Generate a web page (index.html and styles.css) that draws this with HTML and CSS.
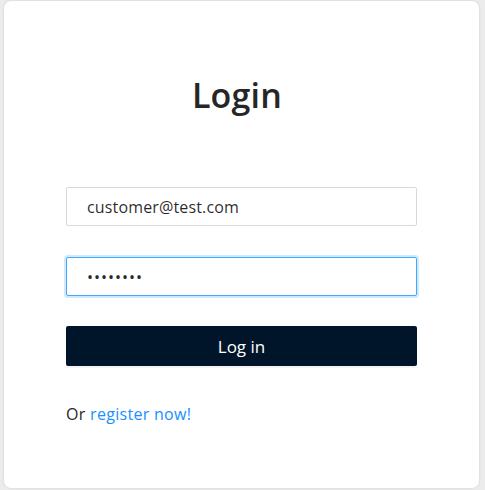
FILE: index.html
```html
<!DOCTYPE html>
<html lang="en">
<head>
<meta charset="utf-8">
<title>Login</title>
<link rel="stylesheet" href="styles.css">
</head>
<body>
<div class="page">
  <div class="card">
    <h1 class="title">Login</h1>
    <form class="form">
      <input class="input" type="text" value="customer@test.com">
      <input class="input input-focus" type="password" value="password">
      <button class="btn" type="button">Log in</button>
      <p class="register">Or <a href="#" class="link">register now!</a></p>
    </form>
  </div>
</div>
</body>
</html>
```

FILE: styles.css
```css
* { box-sizing: border-box; }
html, body { margin: 0; padding: 0; }
body {
  background: #ffffff;
  font-family: "Open Sans", "Noto Sans", sans-serif;
  color: rgba(0, 0, 0, 0.85);
}
.page {
  width: 485px;
  height: 490px;
  padding: 1px 6px 2px 4px;
  background: #ececec;
}
.card {
  height: 100%;
  background: #fff;
  border-radius: 7px;
  box-shadow: 0 0 3px rgba(0, 0, 0, 0.12);
  padding: 72px 62px 0 62px;
  display: flex;
  flex-direction: column;
  align-items: stretch;
}
.title {
  margin: 0;
  padding-right: 9px;
  text-align: center;
  font-size: 34px;
  font-weight: 600;
  line-height: 44px;
  color: #262626;
  letter-spacing: 0.2px;
}
.form {
  margin-top: 70px;
  display: flex;
  flex-direction: column;
}
.input {
  height: 39px;
  border: 1px solid #d9d9d9;
  border-radius: 2px;
  padding: 0 20px;
  font-family: inherit;
  font-size: 16px;
  letter-spacing: 0.15px;
  color: rgba(0, 0, 0, 0.85);
  outline: none;
  background: #fff;
  margin-bottom: 31px;
}
.input-focus {
  border-color: #40a9ff;
  box-shadow: 0 0 0 2px rgba(24, 144, 255, 0.2);
  letter-spacing: 1px;
}
.btn {
  height: 40px;
  border: none;
  border-radius: 2px;
  background: #001529;
  color: #fff;
  font-family: inherit;
  font-size: 17px;
  box-shadow: 0 2px 0 rgba(0, 0, 0, 0.045);
  margin-top: -1px;
}
.register {
  margin: 36px 0 0;
  font-size: 16px;
  line-height: 24px;
  letter-spacing: 0.3px;
  color: #262626;
}
.link {
  color: #1890ff;
  text-decoration: none;
}
```
